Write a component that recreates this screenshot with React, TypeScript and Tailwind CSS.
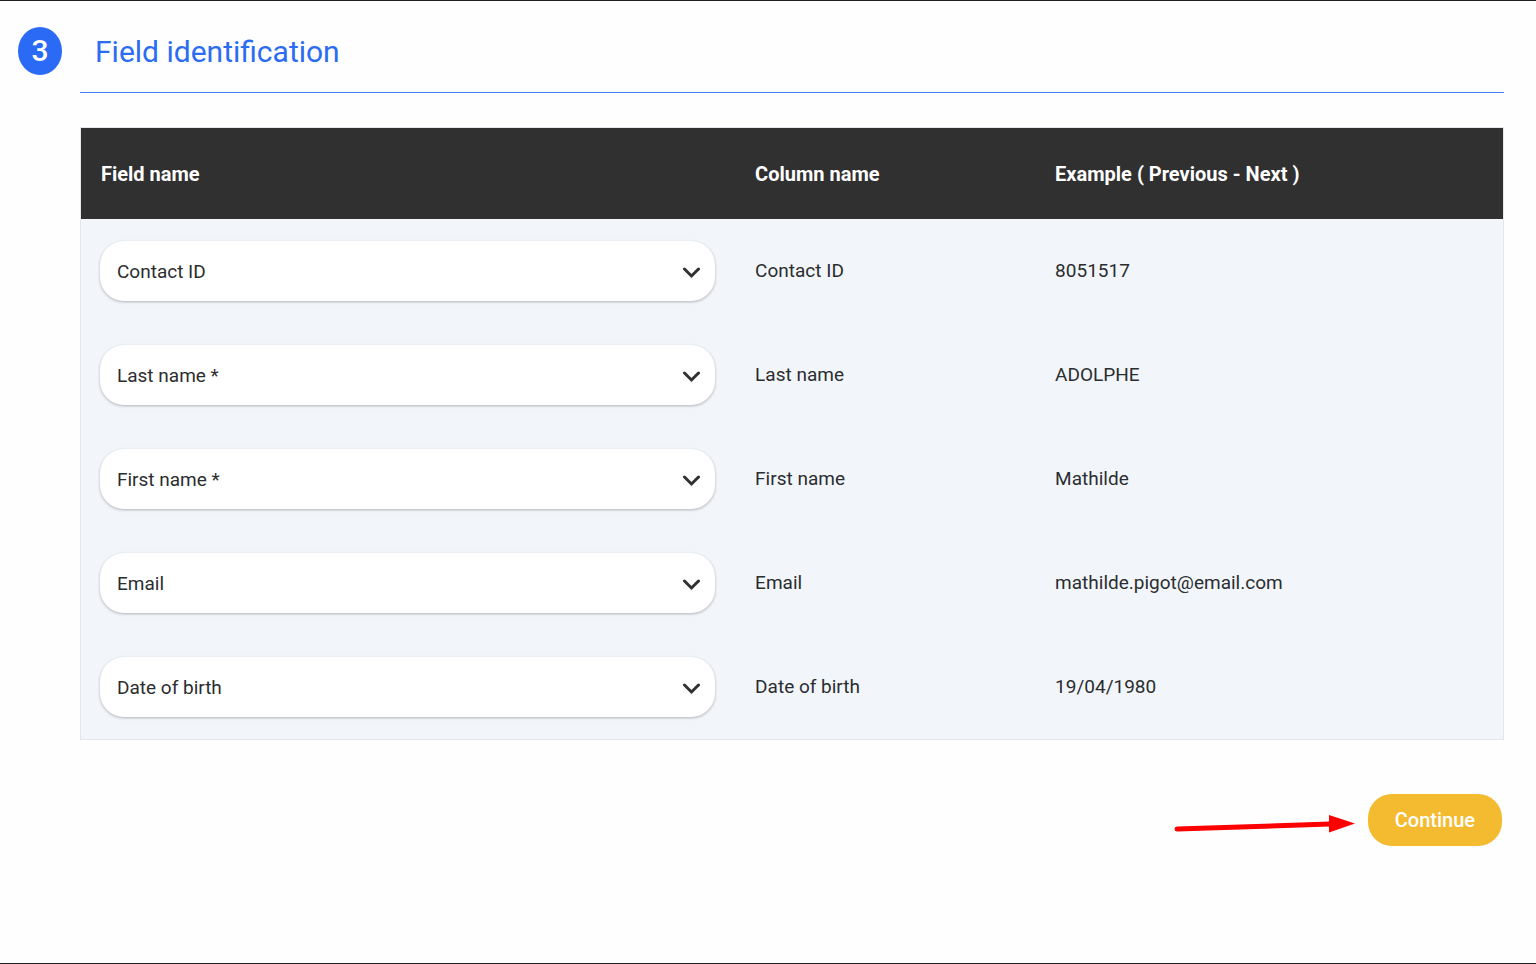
import React from 'react';

const rows = [
  { id: 'contact-id', field: 'Contact ID', column: 'Contact ID', example: '8051517' },
  { id: 'last-name', field: 'Last name *', column: 'Last name', example: 'ADOLPHE' },
  { id: 'first-name', field: 'First name *', column: 'First name', example: 'Mathilde' },
  { id: 'email', field: 'Email', column: 'Email', example: 'mathilde.pigot@email.com' },
  { id: 'birth-date', field: 'Date of birth', column: 'Date of birth', example: '19/04/1980' },
];

const FieldSelect = ({ id, value }: { id: string; value: string }) => (
  <div className="relative">
    <select
      id={id}
      aria-label={`Field for ${value}`}
      defaultValue={value}
      className="block h-[60px] w-full appearance-none rounded-3xl bg-white pl-[17px] pr-12 pt-0.5 shadow-[0_1px_3px_rgba(0,0,0,0.28)] outline-none"
    >
      {rows.map((row) => (
        <option key={row.id}>{row.field}</option>
      ))}
    </select>
    <svg
      className="pointer-events-none absolute right-[15px] top-1/2 h-3 w-[18px] -translate-y-1/3"
      viewBox="0 0 18 12"
      fill="none"
      stroke="#303030"
      strokeWidth="3"
    >
      <path d="M2.5 2 9.500 9l7-7" strokeLinecap="round" />
    </svg>
  </div>
);

export default function App() {
  return (
    <div className="min-h-screen border-y border-[#231f20] bg-[#fefefe] pr-8 font-[Roboto,sans-serif] text-[19px] text-[#2b2d2f]">
      {/* Step header */}
      <div className="flex">
        <div className="w-20 shrink-0 pl-[18px] pt-[26px]">
          <span className="flex h-12 w-11 items-center justify-center rounded-[50%] bg-[#2b6af5] text-3xl font-medium text-white">
            3
          </span>
        </div>
        <h1 className="flex h-[92px] flex-1 items-center border-b border-[#3f7ff0] px-[15px] pb-2 pt-[18px] text-3xl text-[#2b6cf3]">
          Field identification
        </h1>
      </div>

      <main className="ml-20 mt-[34px]">
        <table className="w-full table-fixed border-separate border-spacing-0 border border-[#e3e6ea] text-left">
          <thead className="bg-[#303030] text-xl text-white">
            <tr className="h-[91px]">
              <th className="w-[46%] px-5 font-bold">Field name</th>
              <th className="w-[300px] px-5 font-bold">Column name</th>
              <th className="px-5 font-bold">
                Example ( <button type="button">Previous</button> - <button type="button">Next</button> )
              </th>
            </tr>
          </thead>
          <tbody className="bg-[#f2f6fb]">
            {rows.map((row) => (
              <tr key={row.id} className="h-[104px]">
                <td className="pl-[19px] pr-5">
                  <FieldSelect id={row.id} value={row.field} />
                </td>
                <td className="px-5">{row.column}</td>
                <td className="px-5">{row.example}</td>
              </tr>
            ))}
          </tbody>
        </table>

        {/* Actions */}
        <div className="mt-[54px] flex items-center justify-end gap-3 pr-0.5">
          <svg className="h-8 w-[182px]" viewBox="0 0 182 32" fill="none">
            <path d="M3 25 156 20" stroke="#ff0000" strokeWidth="5" strokeLinecap="round" />
            <path d="M155 11v17.500l26-9z" fill="#ff0000" />
          </svg>
          <button type="button" className="h-[52px] rounded-3xl bg-[#f4bb31] px-[27px] text-xl font-medium text-white">
            Continue
          </button>
        </div>
      </main>
    </div>
  );
}
